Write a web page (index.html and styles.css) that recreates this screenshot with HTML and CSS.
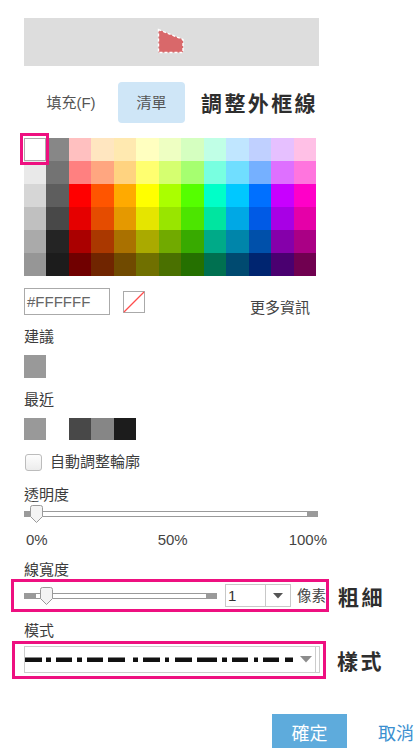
FILE: index.html
```html
<!DOCTYPE html>
<html lang="zh-Hant">
<head>
<meta charset="utf-8">
<title>調整外框線</title>
<link rel="stylesheet" href="styles.css">
</head>
<body>
<div class="page">
  <div class="preview">
    <svg class="shape" width="28" height="26" viewBox="0 0 28 26">
      <polygon points="1.5,1.5 26,11.5 26,24.5 1.5,24.5" fill="#d9686a" stroke="#fff" stroke-width="1.4" stroke-dasharray="3 2"/>
    </svg>
  </div>

  <div class="tabs">
    <div class="tab">填充(F)</div>
    <div class="tab tab-active">清單</div>
    <div class="title">調整外框線</div>
  </div>

  <div class="palette">
    <div class="cell cell-selected" style="background:#ffffff"></div><div class="cell" style="background:#878787"></div><div class="cell" style="background:#ffc0c0"></div><div class="cell" style="background:#ffe6c0"></div><div class="cell" style="background:#ffe9b0"></div><div class="cell" style="background:#ffffc0"></div><div class="cell" style="background:#eeffc2"></div><div class="cell" style="background:#d5ffc0"></div><div class="cell" style="background:#c0ffe6"></div><div class="cell" style="background:#c0e6ff"></div><div class="cell" style="background:#c0d0ff"></div><div class="cell" style="background:#e6c0ff"></div><div class="cell" style="background:#ffc0e6"></div>
    <div class="cell" style="background:#e9e9e9"></div><div class="cell" style="background:#737373"></div><div class="cell" style="background:#ff8080"></div><div class="cell" style="background:#ffa680"></div><div class="cell" style="background:#ffd380"></div><div class="cell" style="background:#ffff70"></div><div class="cell" style="background:#d5ff70"></div><div class="cell" style="background:#a6ff70"></div><div class="cell" style="background:#78ffe0"></div><div class="cell" style="background:#70deff"></div><div class="cell" style="background:#75b0ff"></div><div class="cell" style="background:#de70ff"></div><div class="cell" style="background:#ff75de"></div>
    <div class="cell" style="background:#d6d6d6"></div><div class="cell" style="background:#5e5e5e"></div><div class="cell" style="background:#ff0000"></div><div class="cell" style="background:#ff5500"></div><div class="cell" style="background:#ffaa00"></div><div class="cell" style="background:#ffff00"></div><div class="cell" style="background:#aaff00"></div><div class="cell" style="background:#55ff00"></div><div class="cell" style="background:#00ffc8"></div><div class="cell" style="background:#00c8ff"></div><div class="cell" style="background:#0070ff"></div><div class="cell" style="background:#c800ff"></div><div class="cell" style="background:#ff00c8"></div>
    <div class="cell" style="background:#c0c0c0"></div><div class="cell" style="background:#484848"></div><div class="cell" style="background:#e50000"></div><div class="cell" style="background:#e54c00"></div><div class="cell" style="background:#e59900"></div><div class="cell" style="background:#e5e500"></div><div class="cell" style="background:#99e500"></div><div class="cell" style="background:#4ce500"></div><div class="cell" style="background:#00e5a0"></div><div class="cell" style="background:#00a8e5"></div><div class="cell" style="background:#005ae5"></div><div class="cell" style="background:#a800e5"></div><div class="cell" style="background:#e500a8"></div>
    <div class="cell" style="background:#aaaaaa"></div><div class="cell" style="background:#242424"></div><div class="cell" style="background:#aa0000"></div><div class="cell" style="background:#aa3800"></div><div class="cell" style="background:#aa7100"></div><div class="cell" style="background:#aaaa00"></div><div class="cell" style="background:#71aa00"></div><div class="cell" style="background:#38aa00"></div><div class="cell" style="background:#00aa88"></div><div class="cell" style="background:#0085aa"></div><div class="cell" style="background:#0050aa"></div><div class="cell" style="background:#8500aa"></div><div class="cell" style="background:#aa0085"></div>
    <div class="cell" style="background:#969696"></div><div class="cell" style="background:#1c1c1c"></div><div class="cell" style="background:#700000"></div><div class="cell" style="background:#702500"></div><div class="cell" style="background:#704a00"></div><div class="cell" style="background:#707000"></div><div class="cell" style="background:#4a7000"></div><div class="cell" style="background:#257000"></div><div class="cell" style="background:#007050"></div><div class="cell" style="background:#004a70"></div><div class="cell" style="background:#002570"></div><div class="cell" style="background:#4a0070"></div><div class="cell" style="background:#700050"></div>
  </div>

  <div class="hex-row">
    <div class="hex-input">#FFFFFF</div>
    <svg class="no-color" width="22" height="22" viewBox="0 0 22 22">
      <rect x="0.5" y="0.5" width="21" height="21" fill="#fff" stroke="#aaa"/>
      <line x1="1" y1="21" x2="21" y2="1" stroke="#ff4d4d" stroke-width="1.2"/>
    </svg>
    <div class="more">更多資訊</div>
  </div>

  <div class="label label-suggest">建議</div>
  <div class="swatch-row">
    <div class="swatch swatch-tall" style="background:#999999"></div>
  </div>

  <div class="label label-recent">最近</div>
  <div class="swatch-row recent-row">
    <div class="swatch" style="background:#999999"></div>
    <div class="swatch-group">
      <div class="swatch" style="background:#484848"></div>
      <div class="swatch swatch-wide" style="background:#868686"></div>
      <div class="swatch" style="background:#1c1c1c"></div>
    </div>
  </div>

  <div class="check-row">
    <span class="checkbox"></span>
    <span class="check-label">自動調整輪廓</span>
  </div>

  <div class="label label-opacity">透明度</div>
  <div class="slider slider-opacity">
    <div class="track">
      <span class="cap cap-left"></span><span class="rail"></span><span class="cap cap-right"></span>
    </div>
    <svg class="thumb thumb-opacity" width="13" height="18" viewBox="0 0 13 18">
      <path d="M0.5 2.5 Q0.5 0.5 2.5 0.5 H10.5 Q12.5 0.5 12.5 2.5 V11.5 L6.5 17.5 L0.5 11.5 Z" fill="#f4f4f4" stroke="#9a9a9a"/>
    </svg>
  </div>
  <div class="percents">
    <span>0%</span><span class="pct-mid">50%</span><span>100%</span>
  </div>

  <div class="label label-width">線寬度</div>
  <div class="annot-row">
    <div class="annot-box annot-box-width">
      <div class="slider slider-width">
        <div class="track">
          <span class="cap cap-left cap-left-wide"></span><span class="rail"></span><span class="cap cap-right"></span>
        </div>
        <svg class="thumb thumb-width" width="13" height="18" viewBox="0 0 13 18">
          <path d="M0.5 2.5 Q0.5 0.5 2.5 0.5 H10.5 Q12.5 0.5 12.5 2.5 V11.5 L6.5 17.5 L0.5 11.5 Z" fill="#f4f4f4" stroke="#9a9a9a"/>
        </svg>
      </div>
      <div class="dropdown">
        <span class="dd-value">1</span>
        <span class="dd-button">
          <svg width="10" height="6" viewBox="0 0 10 6"><polygon points="0,0 10,0 5,5.5" fill="#555"/></svg>
        </span>
      </div>
      <span class="unit">像素</span>
    </div>
    <div class="annot-label">粗細</div>
  </div>

  <div class="label label-style">模式</div>
  <div class="annot-row">
    <div class="annot-box annot-box-style">
      <div class="pattern-select">
        <svg class="pattern" width="270" height="6" viewBox="0 0 270 6">
          <g fill="#111">
            <rect x="0" y="0.5" width="17" height="4.5"/>
            <rect x="21" y="0.5" width="5" height="4.5"/>
            <rect x="31" y="0.5" width="16" height="4.5"/>
            <rect x="52" y="0.5" width="5" height="4.5"/>
            <rect x="62" y="0.5" width="16" height="4.5"/>
            <rect x="83" y="0.5" width="17" height="4.5"/>
            <rect x="108" y="0.5" width="5" height="4.5"/>
            <rect x="118" y="0.5" width="17" height="4.5"/>
            <rect x="140" y="0.5" width="4" height="4.5"/>
            <rect x="150" y="0.5" width="17" height="4.5"/>
            <rect x="172" y="0.5" width="20" height="4.5"/>
            <rect x="197" y="0.5" width="5" height="4.5"/>
            <rect x="207" y="0.5" width="16" height="4.5"/>
            <rect x="229" y="0.5" width="4" height="4.5"/>
            <rect x="238" y="0.5" width="16" height="4.5"/>
            <rect x="260" y="0.5" width="8" height="4.5"/>
          </g>
        </svg>
        <svg class="sel-arrow" width="12" height="7" viewBox="0 0 12 7"><polygon points="0,0 12,0 6,6.5" fill="#8c8c8c"/></svg>
      </div>
    </div>
    <div class="annot-label">樣式</div>
  </div>

  <div class="buttons">
    <div class="btn-ok">確定</div>
    <div class="btn-cancel">取消</div>
  </div>
</div>
</body>
</html>
```

FILE: styles.css
```css
*, *::before, *::after {
  box-sizing: border-box;
}

html, body {
  margin: 0;
  padding: 0;
  background: #ffffff;
  overflow: hidden;
}

body {
  font-family: "Liberation Sans", "Noto Sans CJK TC", sans-serif;
  color: #3c3c3c;
  font-size: 15px;
  width: 420px;
  height: 748px;
}

.page {
  padding: 18px 0 0 24px;
}

/* preview */
.preview {
  width: 295px;
  height: 48px;
  background: #dddddd;
  display: flex;
  align-items: center;
  justify-content: center;
}

.shape {
  display: block;
  margin-top: -2px;
  margin-left: -1px;
}

/* tabs */
.tabs {
  margin-top: 16px;
  height: 41px;
  display: flex;
  align-items: center;
}

.tab {
  height: 41px;
  line-height: 41px;
  text-align: center;
  font-size: 15px;
  color: #555555;
  width: 92px;
  padding-left: 2px;
}

.tab-active {
  width: 67px;
  margin-left: 2px;
  padding-left: 0;
  background: #cfe6f7;
  border-radius: 4px;
}

.title {
  margin-left: 16px;
  font-size: 21px;
  font-weight: bold;
  letter-spacing: 2.4px;
  color: #2e2e2e;
  line-height: 41px;
  font-family: "Noto Sans CJK TC", sans-serif;
}

/* palette */
.palette {
  margin-top: 15px;
  display: grid;
  grid-template-columns: 22px 23px 22px 23px 22px 23px 22px 23px 22px 23px 22px 23px 22px;
  grid-template-rows: repeat(6, 23px);
  width: 292px;
}

.cell {
  width: 100%;
  height: 100%;
}

.cell-selected {
  position: relative;
  border: 1px solid #aaaaaa;
}

.cell-selected::after {
  content: "";
  position: absolute;
  left: -5px;
  top: -6px;
  width: 29px;
  height: 32px;
  border: 3px solid #ee1080;
}

/* hex row */
.hex-row {
  margin-top: 12px;
  display: flex;
  align-items: center;
  height: 27px;
}

.hex-input {
  width: 86px;
  height: 27px;
  border: 1px solid #aaaaaa;
  font-size: 15px;
  line-height: 25px;
  padding-left: 2px;
  color: #666666;
  font-family: "Liberation Sans", sans-serif;
}

.no-color {
  display: block;
  margin-left: 13px;
}

.more {
  margin-left: 105px;
  align-self: flex-end;
  line-height: 20px;
  height: 20px;
  margin-bottom: -3px;
  font-size: 15px;
  color: #444444;
}

/* labels */
.label {
  height: 20px;
  line-height: 20px;
  font-size: 15px;
  color: #3c3c3c;
}

.label-suggest { margin-top: 12px; }
.label-recent { margin-top: 12px; }
.label-opacity { margin-top: 13px; }
.label-width { margin-top: 10px; height: 19px; }
.label-style { margin-top: 9px; }

.swatch-row {
  margin-top: 8px;
  display: flex;
}

.swatch {
  width: 22px;
  height: 22px;
}

.swatch-tall {
  height: 23px;
}

.swatch-wide {
  width: 23px;
}

.swatch-group {
  display: flex;
  margin-left: 23px;
}

/* checkbox */
.check-row {
  margin-top: 12px;
  height: 20px;
  display: flex;
  align-items: center;
}

.checkbox {
  width: 17px;
  height: 17px;
  margin-left: 1px;
  border: 1px solid #bcbcbc;
  border-radius: 3px;
  background: linear-gradient(#fdfdfd, #ececec);
}

.check-label {
  margin-left: 8px;
  font-size: 15px;
  line-height: 20px;
  color: #3c3c3c;
}

/* sliders */
.slider {
  position: relative;
  height: 18px;
  flex-shrink: 0;
}

.slider-opacity {
  width: 294px;
}

.track {
  position: absolute;
  left: 0;
  right: 0;
  top: 6px;
  height: 6px;
  display: flex;
}

.cap {
  height: 6px;
  background: #9a9a9a;
}

.cap-left { width: 8px; }
.cap-left-wide { width: 12px; }
.cap-right { width: 11px; }

.rail {
  flex: 1;
  height: 6px;
  border-top: 1px solid #9a9a9a;
  border-bottom: 1px solid #9a9a9a;
  background: #ffffff;
}

.thumb {
  position: absolute;
  top: 0;
  display: block;
}

.thumb-opacity { left: 6px; }
.thumb-width { left: 16px; }

.percents {
  margin-top: 7px;
  width: 303px;
  padding-left: 2px;
  height: 20px;
  line-height: 20px;
  display: flex;
  justify-content: space-between;
  font-size: 15px;
  color: #444444;
  font-family: "Liberation Sans", sans-serif;
}

.pct-mid {
  margin-left: 9px;
}

/* annotated rows */
.annot-row {
  display: flex;
  align-items: center;
}

.annot-box {
  border: 3px solid #ee1080;
  display: flex;
  align-items: center;
  flex-shrink: 0;
}

.annot-box-width {
  margin-left: -13px;
  width: 318px;
  height: 33px;
  padding-left: 10px;
}

.slider-width {
  width: 193px;
}

.dropdown {
  margin-left: 8px;
  width: 66px;
  height: 23px;
  flex-shrink: 0;
  border: 1px solid #c8c8c8;
  display: flex;
  align-items: stretch;
}

.dd-value {
  flex: 1;
  font-size: 15px;
  line-height: 22px;
  padding-left: 2px;
  color: #333333;
  font-family: "Liberation Sans", sans-serif;
}

.dd-button {
  width: 25px;
  border-left: 1px solid #c8c8c8;
  display: flex;
  align-items: center;
  justify-content: center;
}

.dd-button svg {
  display: block;
}

.unit {
  margin-left: 6px;
  font-size: 14.5px;
  white-space: nowrap;
  flex-shrink: 0;
  color: #444444;
  line-height: 20px;
}

.annot-label {
  font-family: "Noto Sans CJK TC", sans-serif;
  font-size: 21px;
  font-weight: bold;
  letter-spacing: 2.4px;
  color: #2e2e2e;
  line-height: 30px;
  white-space: nowrap;
}

.annot-box-width + .annot-label {
  margin-left: 9px;
}

.annot-box-style {
  margin-left: -12px;
  width: 314px;
  height: 38px;
  padding-left: 9px;
}

.annot-box-style + .annot-label {
  margin-left: 11px;
}

.pattern-select {
  width: 296px;
  height: 27px;
  flex-shrink: 0;
  border: 1px solid #cccccc;
  box-shadow: inset -3px 0 0 #ffffff, inset -4px 0 0 #cccccc;
  display: flex;
  align-items: center;
  margin-top: -1px;
}

.pattern {
  display: block;
  margin-left: 0;
}

.sel-arrow {
  display: block;
  margin-left: 5px;
  margin-top: -1px;
}

/* buttons */
.buttons {
  margin-top: 35px;
  display: flex;
  align-items: center;
}

.btn-ok {
  margin-left: 248px;
  width: 75px;
  height: 40px;
  line-height: 40px;
  text-align: center;
  background: #5eabdc;
  color: #ffffff;
  font-size: 18px;
  flex-shrink: 0;
}

.btn-cancel {
  margin-left: 31px;
  font-size: 18px;
  line-height: 40px;
  color: #3a8fd0;
  white-space: nowrap;
}
```
